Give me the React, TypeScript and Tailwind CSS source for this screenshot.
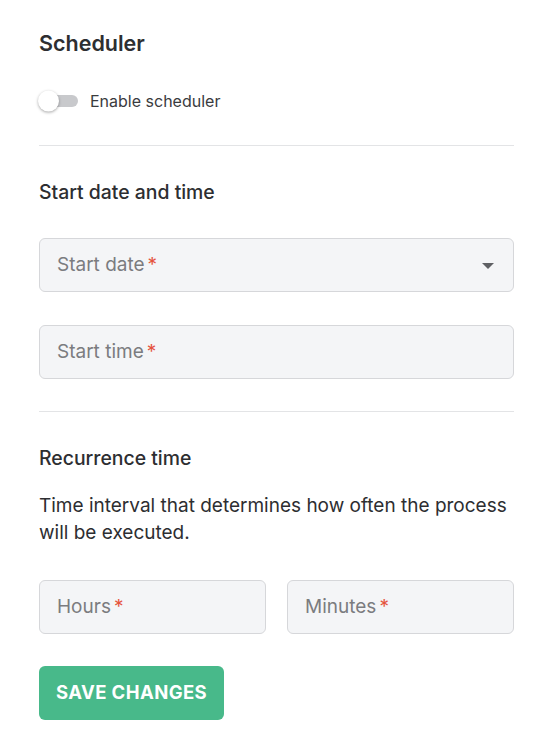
import { useState } from 'react'

function Field({ label, select = false, className = '' }: { label: string; select?: boolean; className?: string }) {
  return (
    <div
      className={`flex h-[54px] items-center justify-between rounded-md border border-[#d6d7da] bg-[#f4f5f7] pl-[17px] pr-[19px] ${className}`}
    >
      <span className="text-[19px] text-[#7b7c7f]">
        {label}
        <span className="ml-[3px] text-[#e5533d]">*</span>
      </span>
      {select && (
        <svg width="12" height="6" viewBox="0 0 12 6" className="mt-[1px]">
          <path d="M0 0h12L6 6z" fill="#5f6064" />
        </svg>
      )}
    </div>
  )
}

export default function App() {
  const [enabled, setEnabled] = useState(false)

  return (
    <div
      className="min-h-screen bg-white pl-[39px] pt-[29px] text-[#2d2e31]"
      style={{ fontFamily: 'Inter, "Noto Sans", sans-serif' }}
    >
      <div className="w-[475px]">
        <h1 className="text-[21.5px] font-semibold leading-[28px]">Scheduler</h1>

        <label className="mt-[33px] flex cursor-pointer items-center gap-[12px]">
          <button
            type="button"
            onClick={() => setEnabled(!enabled)}
            className="relative h-[12px] w-[39px] rounded-full bg-[#c8c9cc]"
          >
            <span
              className={`absolute top-1/2 h-[21px] w-[21px] -translate-y-1/2 rounded-full bg-white shadow-[0_1px_3px_rgba(0,0,0,0.35)] ${
                enabled ? 'left-[19px]' : 'left-[-1px]'
              }`}
            />
          </button>
          <span className="text-[16px] leading-[22px] text-[#3a3b3e]">Enable scheduler</span>
        </label>

        <div className="mt-[33px] border-t border-[#e3e4e6]" />

        <h2 className="mt-[33px] text-[19.4px] font-medium leading-[26px]">Start date and time</h2>

        <Field label="Start date" select className="mt-[33px]" />
        <Field label="Start time" className="mt-[33px]" />

        <div className="mt-[32px] border-t border-[#e3e4e6]" />

        <h2 className="mt-[33px] text-[19.4px] font-medium leading-[26px]">Recurrence time</h2>

        <p className="mt-[21px] text-[19px] leading-[27px] text-[#2d2e31]">
          Time interval that determines how often the process will be executed.
        </p>

        <div className="mt-[34px] grid grid-cols-2 gap-[21px]">
          <Field label="Hours" />
          <Field label="Minutes" />
        </div>

        <button
          type="button"
          className="mt-[32px] h-[54px] rounded-md bg-[#48b98a] px-[17px] text-[18.5px] font-bold tracking-[0.4px] text-white"
        >
          SAVE CHANGES
        </button>
      </div>
    </div>
  )
}
